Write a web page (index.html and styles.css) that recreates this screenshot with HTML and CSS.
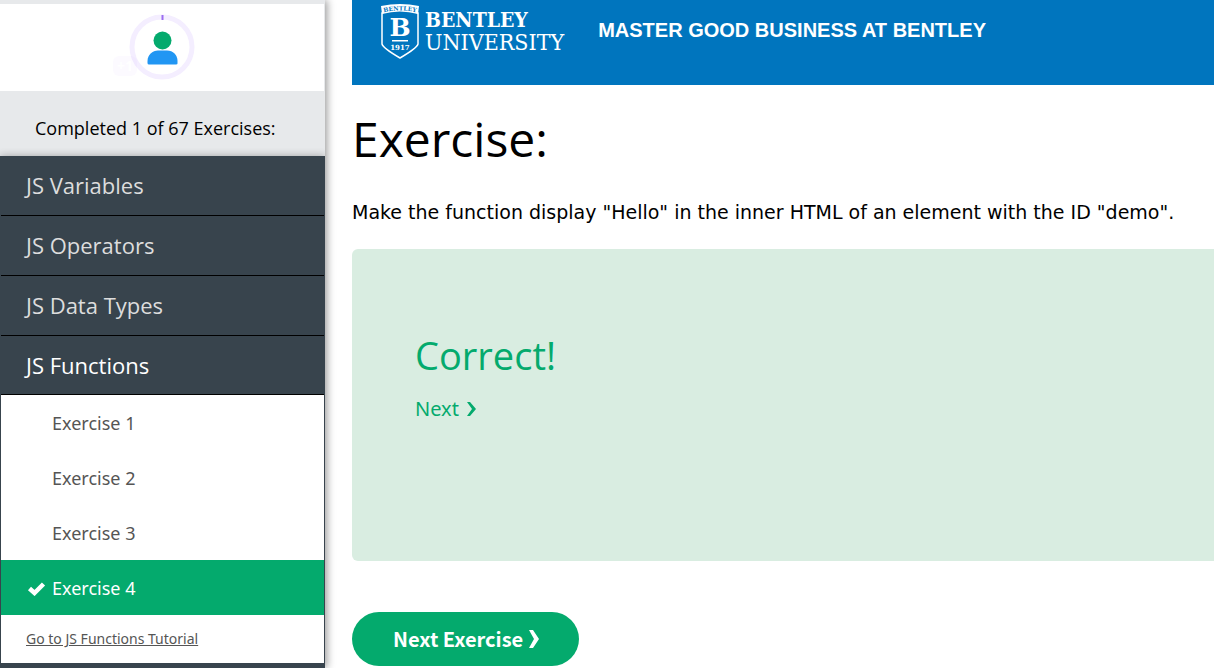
FILE: index.html
```html
<!DOCTYPE html>
<html lang="en">
<head>
<meta charset="utf-8">
<meta name="viewport" content="width=device-width, initial-scale=1">
<title>JS Functions Exercise</title>
<link rel="stylesheet" href="styles.css">
</head>
<body>
<div class="layout">
  <aside class="sidebar">
    <div class="profile">
      <div class="avatar">
        <svg width="66" height="66" viewBox="0 0 66 66" aria-hidden="true">
          <circle cx="33" cy="33" r="30" fill="none" stroke="#f4eeff" stroke-width="5"/>
          <path d="M33.500 1v5" stroke="#9b6df0" stroke-width="2"/>
          <circle cx="33.500" cy="26.500" r="9" fill="#04aa6d"/>
          <path d="M18.500 48.500V47C18.500 41 23.500 36.500 29 36.500h9c6 0 10.500 4.500 10.500 10.500v2.500q0 1-1.500 1H20q-1.500 0-1.500-1.500z" fill="#2196f3"/>
        </svg>
        <span class="points">+1</span>
      </div>
    </div>
    <div class="progress">Completed 1 of 67 Exercises:</div>
    <nav class="menu">
      <button class="topic" type="button">JS Variables</button>
      <button class="topic" type="button">JS Operators</button>
      <button class="topic" type="button">JS Data Types</button>
      <button class="topic open" type="button">JS Functions</button>
      <div class="exercises">
        <a class="exercise" href="#">Exercise 1</a>
        <a class="exercise" href="#">Exercise 2</a>
        <a class="exercise" href="#">Exercise 3</a>
        <a class="exercise current" href="#"><svg class="check" width="19" height="15" viewBox="0 0 19 15" aria-hidden="true"><path d="M2.500 7.500l5 4.500 9-9" fill="none" stroke="#fff" stroke-width="4.500"/></svg>Exercise 4</a>
        <a class="tutorial" href="#">Go to JS Functions Tutorial</a>
      </div>
    </nav>
  </aside>
  <main class="content">
    <a class="banner" href="#">
      <span class="logo">
        <svg width="38" height="56" viewBox="0 0 38 56" aria-hidden="true">
          <path d="M1 9q18-8 36 0v31q-1 4-18 14Q2 44 1 40z" fill="none" stroke="#fff" stroke-width="1.500"/>
          <g class="crest" fill="#fff" text-anchor="middle">
            <path id="arc" d="M0 9q19-5 38 0" fill="none"/>
            <path d="M0 2q19-4 38 0l-1 8q-18-5-36 0z"/>
            <text class="crest-name"><textPath href="#arc" startOffset="50%">BENTLEY</textPath></text>
            <text class="crest-letter" x="19" y="32">B</text>
            <path d="M11 36h16v1.500H11z"/>
            <text class="crest-year" x="19" y="46">1917</text>
          </g>
        </svg>
        <span class="wordmark"><b>BENTLEY</b><span>UNIVERSITY</span></span>
      </span>
      <span class="slogan">MASTER GOOD BUSINESS AT BENTLEY</span>
    </a>
    <h1 class="title">Exercise:</h1>
    <p class="task">Make the function display "Hello" in the inner HTML of an element with the ID "demo".</p>
    <section class="result">
      <h2 class="verdict">Correct!</h2>
      <a class="next" href="#">Next
        <svg width="10" height="16" viewBox="0 0 10 16" aria-hidden="true"><path d="M0 1h3l6 7-6 7H0l5-7z" fill="currentColor"/></svg>
      </a>
    </section>
    <button class="next-exercise" type="button">Next Exercise
      <svg width="11" height="18" viewBox="0 0 11 18" aria-hidden="true"><path d="M0 0h4l6 9-6 9H0l5-9z" fill="currentColor"/></svg>
    </button>
  </main>
</div>
</body>
</html>
```
FILE: styles.css
```css
* { box-sizing: border-box; }
body {
  margin: 0;
  background: #fff;
  color: #000;
  font-family: "Open Sans", "Noto Sans", sans-serif;
  overflow: hidden;
}
a { color: inherit; text-decoration: none; }
button { border: 0; cursor: pointer; font-family: inherit; text-align: left; }
.layout { display: flex; min-height: 100vh; }

.sidebar {
  flex: 0 0 325px;
  display: flex;
  flex-direction: column;
  background: #e7e9eb;
  box-shadow: 2px 0 8px rgba(0, 0, 0, .4);
}
.profile {
  margin-top: 4px;
  border-right: 1px solid #e7e9eb;
  padding: 10px 0 11px;
  background: #fff;
  display: flex;
  justify-content: center;
}
.avatar { position: relative; height: 66px; }
.points {
  position: absolute;
  left: -16px;
  top: 42px;
  width: 24px;
  border-radius: 6px;
  background: rgba(155, 109, 240, .03);
  color: #fff;
  font-size: 14px;
  font-weight: 700;
  line-height: 20px;
  text-align: center;
}
.progress { padding: 21px 35px 12px; font-size: 18px; line-height: 32px; white-space: nowrap; }
.menu {
  flex: 1;
  display: flex;
  flex-direction: column;
  padding: 0 1px;
  background: #38444d;
  box-shadow: 0 0 8px rgba(0, 0, 0, .3);
  clip-path: inset(-8px 0 0 0);
}
.topic {
  padding: 0 25px;
  border-bottom: 1px solid #000;
  background: #38444d;
  color: #ddd;
  font-size: 22px;
  line-height: 59px;
}
.topic.open { border-bottom: 0; box-shadow: inset 0 -1px #000; color: #fff; }
.exercises {
  display: flex;
  flex-direction: column;
  background: #fff;
  color: #555;
  font-family: "Noto Sans", "Open Sans", sans-serif;
}
.exercise { padding: 2px 0 0 51px; font-size: 18px; line-height: 53px; }
.exercise.current {
  display: flex;
  align-items: center;
  gap: 6px;
  padding-left: 26px;
  background: #04aa6d;
  color: #fff;
}
.tutorial { padding-left: 25px; font-size: 14px; line-height: 48px; text-decoration: underline; }

.content { flex: 1; min-width: 0; padding-left: 27px; }
.banner {
  display: flex;
  align-items: flex-start;
  gap: 34px;
  padding: 4px 0 25px 29px;
  background: #0075be;
  color: #fff;
}
.logo { display: flex; gap: 6px; }
.crest { font-family: "DejaVu Serif", serif; font-weight: 700; }
.crest-name { fill: #0075be; font-size: 6px; }
.crest-letter { font-size: 25px; }
.crest-year { font-size: 7px; }
.wordmark {
  display: flex;
  flex-direction: column;
  padding-top: 4px;
  font-family: "DejaVu Serif Condensed", "DejaVu Serif", serif;
  font-size: 23px;
  font-stretch: condensed;
  line-height: 23px;
}
.wordmark b { font-size: 21px; }
.slogan {
  padding-top: 14px;
  font-family: "Liberation Sans", Arial, sans-serif;
  font-size: 20px;
  font-weight: 700;
  line-height: 24px;
  white-space: nowrap;
}
.title { margin: 18px 0 0; font-size: 48px; font-weight: 400; line-height: 72px; }
.task {
  margin: 21px 0;
  font-family: Verdana, "DejaVu Sans", sans-serif;
  font-size: 19px;
  line-height: 32px;
  white-space: nowrap;
}
.result {
  min-height: 312px;
  padding: 80px 63px;
  border-radius: 6px 0 0 6px;
  background: #d9ede1;
  color: #04aa6d;
}
.verdict { margin: 0 0 11px; font-size: 38px; font-weight: 400; line-height: 53px; }
.next {
  display: inline-flex;
  align-items: center;
  gap: 8px;
  font-family: "Noto Sans", sans-serif;
  font-size: 20px;
  line-height: 32px;
}
.next-exercise {
  display: flex;
  align-items: center;
  gap: 6px;
  margin-top: 51px;
  padding: 0 39px 0 41px;
  border-radius: 27px;
  background: #04aa6d;
  color: #fff;
  font-family: "Noto Sans CJK SC", sans-serif;
  font-size: 20px;
  font-weight: 700;
  line-height: 54px;
}
```
